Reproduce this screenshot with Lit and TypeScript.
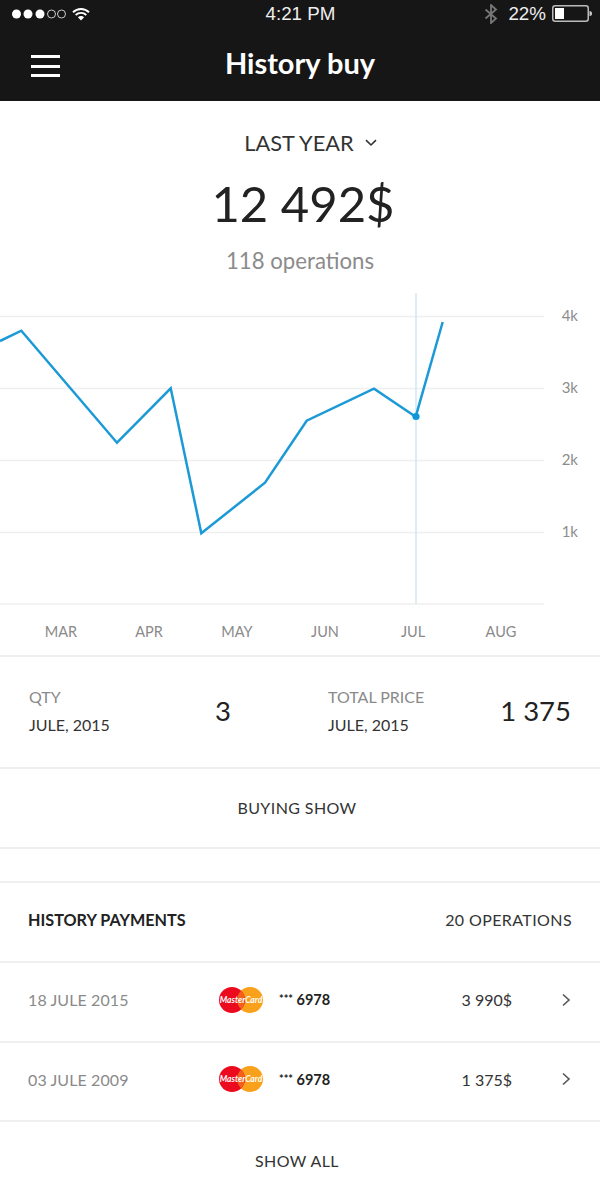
import { LitElement, html, css, svg } from "lit";
import { customElement } from "lit/decorators.js";

const MONTHS = ["MAR", "APR", "MAY", "JUN", "JUL", "AUG"];
const POINTS = "0,341 21.3,330.7 117,442.7 170.7,388.3 201.3,533.3 265,482.7 306.7,420.7 374,388.7 415.7,416.7 442.7,322";
const GRID = [23.5, 95.5, 167.5, 239.5, 311];
const AXIS = [["4k", 23], ["3k", 95], ["2k", 167], ["1k", 239]] as const;
const PAYMENTS = [
  { date: "18 JULE 2015", amount: "3 990$" },
  { date: "03 JULE 2009", amount: "1 375$" },
];

@customElement("app-root")
export class AppRoot extends LitElement {
  static styles = css`
    :host { display: block; width: 600px; height: 1200px; overflow: hidden; background: #fff; font-family: Lato, "Open Sans", sans-serif; color: #222; }
    .header { background: #161616; height: 101px; color: #fff; display: flex; flex-direction: column; }
    .status { height: 27px; display: grid; grid-template-columns: 1fr auto 1fr; align-items: center; padding: 0 8px 0 12px; font-family: "Liberation Sans", Arial, sans-serif; font-size: 18.8px; color: #eee; }
    .status-left { display: flex; align-items: center; gap: 6px; }
    .status-right { display: flex; align-items: center; justify-content: flex-end; gap: 10px; }
    .status-right .pct { margin-right: -4px; }
    .time { margin-left: -3px; }
    .titlebar { flex: 1; position: relative; display: flex; align-items: center; justify-content: center; padding-bottom: 3px; }
    .title { font-size: 29px; font-weight: 700; letter-spacing: 0; }
    .burger { position: absolute; left: 31px; top: 28px; width: 29px; display: flex; flex-direction: column; gap: 6.5px; }
    .burger i { display: block; height: 3px; background: #fff; }
    .hero { height: 192px; display: flex; flex-direction: column; align-items: center; }
    .period { margin-top: 27px; height: 30px; display: flex; align-items: center; gap: 11px; font-size: 21.8px; color: #333; line-height: 30px; margin-left: 21px; }
    .total { margin-top: 15px; margin-left: 6px; font-size: 49px; font-weight: 400; color: #222; line-height: 60px; }
    .ops { margin-top: 13px; font-size: 22.2px; line-height: 30px; color: #8b8b8b; }
    .chart { display: block; width: 600px; height: 312px; }
    .chart text { font-size: 15px; fill: #8d8d8d; font-family: Lato, sans-serif; }
    .months { height: 50px; display: grid; grid-template-columns: repeat(6, 88px); padding-left: 17px; align-items: center; font-size: 14.5px; color: #8a8a8a; text-align: center; padding-top: 2px; box-sizing: border-box; }
    .rule { border-top: 2px solid #efefef; }
    .stats { height: 110px; display: grid; grid-template-columns: 186px 113px 1fr auto; align-items: center; padding: 0 29px 0 29px; }
    .stat-label { font-size: 16px; line-height: 28px; color: #8a8a8a; margin-top: -3px; }
    .stat-label div + div { color: #333; }
    .stat-value { font-size: 27.5px; color: #222; font-weight: 400; margin-top: -4px; }
    .link { height: 76px; display: flex; align-items: center; justify-content: center; font-size: 16px; letter-spacing: .4px; color: #333; padding-right: 6px; padding-bottom: 2px; }
    .foot { padding-bottom: 6px; }
    .gap { height: 32px; }
    .history-head { height: 80px; display: flex; align-items: center; justify-content: space-between; padding: 0 28px 5px; box-sizing: border-box; font-size: 16.2px; color: #222; }
    .history-head b { font-weight: 700; }
    .history-head span { font-size: 16px; letter-spacing: .4px; color: #333; }
    .pay { height: 79.5px; box-sizing: border-box; display: grid; grid-template-columns: 190px 62px 1fr 54px 88px; align-items: center; padding: 0 0 4px 28px; }
    .pay .date { font-size: 16px; color: #8a8a8a; letter-spacing: .1px; }
    .pay .num { font-size: 14.5px; font-weight: 700; color: #222; margin-left: -1px; }
    .pay .stars { font-size: 11px; vertical-align: 2px; }
    .pay .amt { font-size: 16px; text-align: right; color: #333; }
    .chev { display: block; justify-self: end; margin-right: 29px; }
    .mc { display: block; }
    .mc text { font-family: Lato, sans-serif; font-size: 8.5px; font-weight: 700; font-style: italic; fill: #fff; }
  `;

  private mastercard() {
    return html`<svg class="mc" width="46" height="28" viewBox="0 0 46 28">
      <circle cx="32" cy="14" r="13" fill="#f9a11b"></circle>
      <circle cx="14" cy="14" r="13" fill="#ec0a1e"></circle>
      <path d="M23 4.800a13 13 0 0 1 0 18.400 13 13 0 0 1 0-18.400z" fill="#f2601a"></path>
      <text x="23" y="17" text-anchor="middle">MasterCard</text>
    </svg>`;
  }

  render() {
    return html`
      <div class="header">
        <div class="status">
          <div class="status-left">
            <svg width="54" height="10" viewBox="0 0 54 10">
              <circle cx="4.500" cy="5" r="4.500" fill="#fff"></circle>
              <circle cx="16" cy="5" r="4.500" fill="#fff"></circle>
              <circle cx="28" cy="5" r="4.500" fill="#fff"></circle>
              <circle cx="39.500" cy="5" r="4" fill="none" stroke="#ccc"></circle>
              <circle cx="49.500" cy="5" r="4" fill="none" stroke="#ccc"></circle>
            </svg>
            <svg width="18" height="14" viewBox="0 0 18 14">
              <path d="M1 5.200a11.500 11.500 0 0 1 16 0M3.700 8a7.600 7.600 0 0 1 10.600 0" fill="none" stroke="#fff" stroke-width="1.900"></path>
              <path d="M5.900 10.200a4.400 4.400 0 0 1 6.200 0L9 13.600z" fill="#fff"></path>
            </svg>
          </div>
          <div class="time">4:21 PM</div>
          <div class="status-right">
            <svg width="14" height="20" viewBox="0 0 14 20">
              <path d="M1.500 5.500 12 14.500 7 19V1l5 4.500L1.500 14.500" fill="none" stroke="#777" stroke-width="1.800"></path>
            </svg>
            <span class="pct">22%</span>
            <svg width="40" height="17" viewBox="0 0 40 17">
              <rect x=".75" y=".75" width="35.500" height="15.500" rx="2.500" fill="none" stroke="#bbb" stroke-width="1.500"></rect>
              <rect x="3" y="3" width="9" height="11" fill="#fff"></rect>
              <path d="M37.500 6a2.500 2.500 0 0 1 0 5z" fill="#ccc"></path>
            </svg>
          </div>
        </div>
        <div class="titlebar">
          <div class="burger"><i></i><i></i><i></i></div>
          <div class="title">History buy</div>
        </div>
      </div>

      <div class="hero">
        <div class="period">
          LAST YEAR
          <svg width="12" height="8" viewBox="0 0 12 8"><path d="M1 1.200 6 6l5-4.800" fill="none" stroke="#333" stroke-width="1.600"></path></svg>
        </div>
        <div class="total">12 492$</div>
        <div class="ops">118 operations</div>
      </div>

      <svg class="chart" viewBox="0 293 600 312">
        <g transform="translate(0 293)">
          ${GRID.map((y) => svg`<line x1="0" x2="544" y1=${y} y2=${y} stroke="#efefef" stroke-width="1.500"></line>`)}
          ${AXIS.map(([t, y]) => svg`<text x="578" y=${y + 5} text-anchor="end">${t}</text>`)}
        </g>
        <line x1="416" x2="416" y1="293" y2="604" stroke="#cfe9f5" stroke-width="1.500"></line>
        <polyline points=${POINTS} fill="none" stroke="#1c9ad6" stroke-width="2.500" stroke-linejoin="miter"></polyline>
        <circle cx="416" cy="416.500" r="3.600" fill="#0f96d9"></circle>
      </svg>

      <div class="months">${MONTHS.map((m) => html`<div>${m}</div>`)}</div>

      <div class="rule stats">
        <div class="stat-label"><div>QTY</div><div>JULE, 2015</div></div>
        <div class="stat-value">3</div>
        <div class="stat-label"><div>TOTAL PRICE</div><div>JULE, 2015</div></div>
        <div class="stat-value">1 375</div>
      </div>
      <div class="rule link">BUYING SHOW</div>
      <div class="rule gap"></div>
      <div class="rule history-head"><b>HISTORY PAYMENTS</b><span>20 OPERATIONS</span></div>
      ${PAYMENTS.map((p) => html`
        <div class="rule pay">
          <div class="date">${p.date}</div>
          ${this.mastercard()}
          <div class="num"><span class="stars">***</span> 6978</div>
          <div class="amt">${p.amount}</div>
          <svg class="chev" width="10" height="14" viewBox="0 0 10 14"><path d="M2 1.500 8 7l-6 5.500" fill="none" stroke="#555" stroke-width="1.600"></path></svg>
        </div>`)}
      <div class="rule link foot">SHOW ALL</div>
    `;
  }
}
